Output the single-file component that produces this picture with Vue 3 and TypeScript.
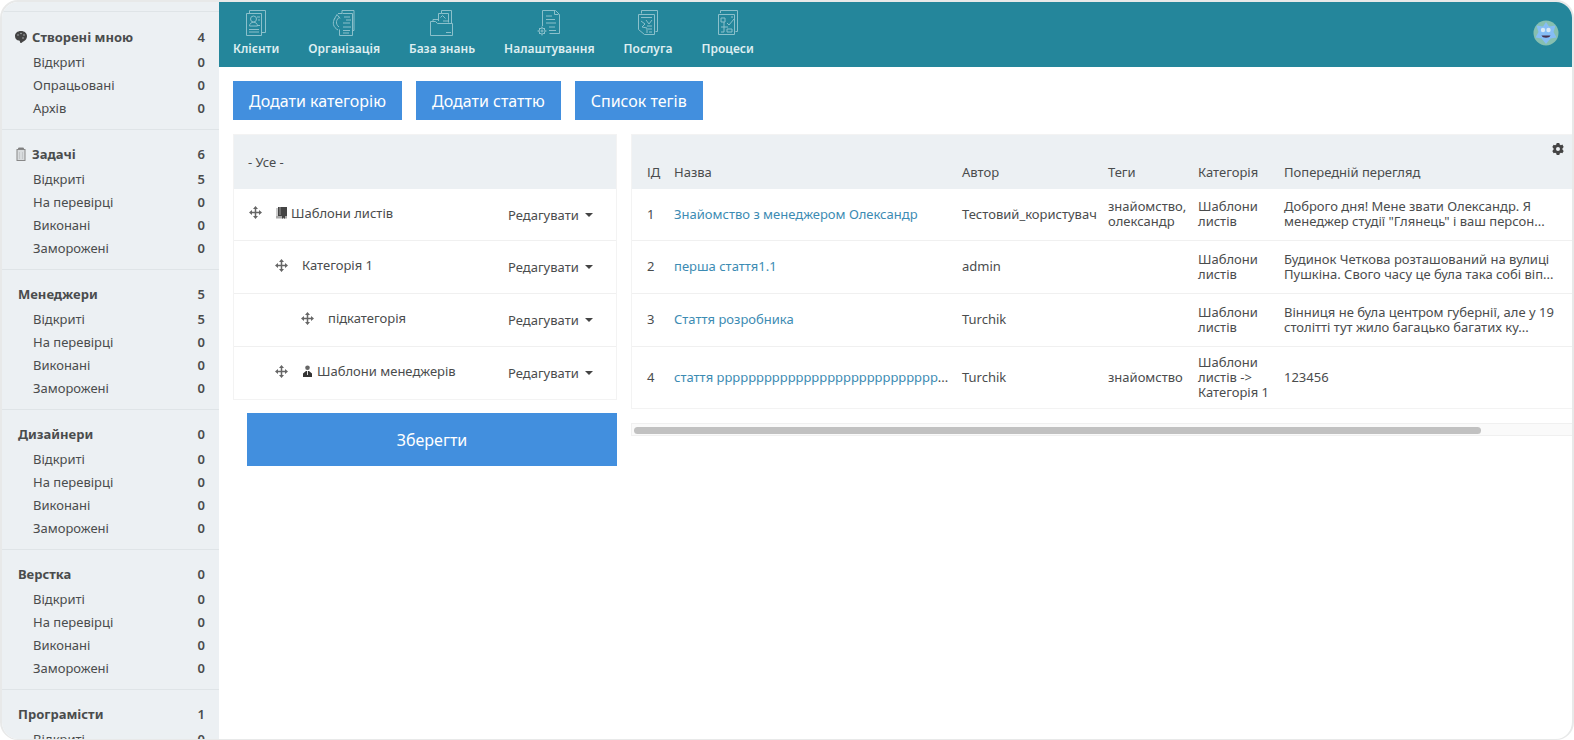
<script setup lang="ts">
interface Counter {
  label: string
  count: number
}
interface Group {
  title: string
  count: number
  icon?: 'palette' | 'clipboard'
  items: Counter[]
}
interface NavItem {
  label: string
  icon: string
}
interface TreeNode {
  label: string
  level: number
  icon?: 'book' | 'user'
}
interface Article {
  id: number
  title: string
  truncated?: boolean
  author: string
  tags: string
  category: string
  preview: string
}

const taskItems = (open: number): Counter[] => [
  { label: 'Відкриті', count: open },
  { label: 'На перевірці', count: 0 },
  { label: 'Виконані', count: 0 },
  { label: 'Заморожені', count: 0 },
]

const groups: Group[] = [
  {
    title: 'Створені мною',
    count: 4,
    icon: 'palette',
    items: [
      { label: 'Відкриті', count: 0 },
      { label: 'Опрацьовані', count: 0 },
      { label: 'Архів', count: 0 },
    ],
  },
  { title: 'Задачі', count: 6, icon: 'clipboard', items: taskItems(5) },
  { title: 'Менеджери', count: 5, items: taskItems(5) },
  { title: 'Дизайнери', count: 0, items: taskItems(0) },
  { title: 'Верстка', count: 0, items: taskItems(0) },
  { title: 'Програмісти', count: 1, items: [{ label: 'Відкриті', count: 0 }] },
]

const nav: NavItem[] = [
  { label: 'Клієнти', icon: 'clients' },
  { label: 'Організація', icon: 'organization' },
  { label: 'База знань', icon: 'knowledge' },
  { label: 'Налаштування', icon: 'settings' },
  { label: 'Послуга', icon: 'service' },
  { label: 'Процеси', icon: 'processes' },
]

const actions: string[] = ['Додати категорію', 'Додати статтю', 'Список тегів']

const tree: TreeNode[] = [
  { label: 'Шаблони листів', level: 0, icon: 'book' },
  { label: 'Категорія 1', level: 1 },
  { label: 'підкатегорія', level: 2 },
  { label: 'Шаблони менеджерів', level: 1, icon: 'user' },
]

const articles: Article[] = [
  {
    id: 1,
    title: 'Знайомство з менеджером Олександр',
    author: 'Тестовий_користувач',
    tags: 'знайомство, олександр',
    category: 'Шаблони листів',
    preview: 'Доброго дня! Мене звати Олександр. Я менеджер студії "Глянець" і ваш персон...',
  },
  {
    id: 2,
    title: 'перша стаття1.1',
    author: 'admin',
    tags: '',
    category: 'Шаблони листів',
    preview: 'Будинок Четкова розташований на вулиці Пушкіна. Свого часу це була така собі віп...',
  },
  {
    id: 3,
    title: 'Стаття розробника',
    author: 'Turchik',
    tags: '',
    category: 'Шаблони листів',
    preview: 'Вінниця не була центром губернії, але у 19 столітті тут жило багацько багатих ку...',
  },
  {
    id: 4,
    title: 'стаття ' + 'р'.repeat(28),
    truncated: true,
    author: 'Turchik',
    tags: 'знайомство',
    category: 'Шаблони листів -> Категорія 1',
    preview: '123456',
  },
]
</script>

<template>
  <div class="app">
    <aside class="sidebar">
      <section v-for="group in groups" :key="group.title" class="group">
        <a href="#" class="group-title">
          <svg v-if="group.icon === 'palette'" class="group-icon" viewBox="0 0 14 14">
            <path d="M7 1C3.2 1 1 3.2 1 6s1.800 4.500 4 4.500c1 0 .8 1.200 1.200 2 .5.900 1.600.5 2.300-.5C10.500 11 13 9.500 13 6c0-2.800-2.500-5-6-5z" fill="#444" />
            <circle cx="4" cy="5" r=".8" fill="#a9adaf" />
            <circle cx="7" cy="3.500" r=".8" fill="#a9adaf" />
            <circle cx="10" cy="5" r=".8" fill="#a9adaf" />
            <circle cx="9" cy="8" r=".8" fill="#a9adaf" />
          </svg>
          <svg v-else-if="group.icon === 'clipboard'" class="group-icon" viewBox="0 0 14 14" fill="none" stroke="#888">
            <rect x="3" y="2.500" width="8" height="11" fill="#d9dcde" />
            <path d="M4.500 2.500V1h5v1.500z" fill="#777" />
            <path d="M5.500 5v7M8.500 5v7" stroke="#c5c8ca" />
          </svg>
          <span>{{ group.title }}</span>
          <span class="count">{{ group.count }}</span>
        </a>
        <a v-for="item in group.items" :key="item.label" href="#" class="group-item">
          <span>{{ item.label }}</span>
          <span class="count">{{ item.count }}</span>
        </a>
      </section>
    </aside>

    <div class="main">
      <header class="topbar">
        <nav class="nav">
          <a v-for="item in nav" :key="item.icon" href="#" class="nav-item">
            <svg class="nav-icon" viewBox="0 0 26 26" fill="none" stroke="currentColor">
              <g v-if="item.icon === 'clients'">
                <path d="M3.500 3.500h15v22h-15zM6.500 3V.5h16v22H19" />
                <circle cx="10.500" cy="9" r="3" />
                <path d="M6.500 16c0-5 8-5 8 0zM6 19.500h10M6 22h10M14 7h3M15 10h2M14 15.500h3" />
              </g>
              <g v-else-if="item.icon === 'organization'">
                <path d="M7 3.500h4V.5h12v20h-1M11.500 3.500h10v22h-13v-6M4 8c-3 5-2 9 3 12" />
                <path d="M3 9.500l3-5 3 4M9 7c-4 2-5 7-1 10M13 7h6M15 10h5M12 13h7M12 17h8M12 20.500h7M12 23h6" />
              </g>
              <g v-else-if="item.icon === 'knowledge'">
                <path d="M1.500 25.500v-14h5l2 2h15v12zM4 11V9.500h5M9.500 11V3.500h3v-3h10v13M12.500 3.500h7v9" />
                <path d="M11.500 7.500l2-2 3 3M14 11h6M17 22.500h5" />
              </g>
              <g v-else-if="item.icon === 'settings'">
                <path d="M6.500 16V.5h13l4 4v19h-10M18.500.5v4h4M10 6h6M10 9.500h9M10 13h10M13 17h6M13 20.500h7" />
                <circle cx="6" cy="21" r="3" />
                <circle cx="6" cy="21" r="1" />
                <path d="M6 16.500V18M6 24v1.500M1.500 21H3M9 21h1.500M3 18l1 1M8 23l1 1M3 24l1-1M8 19l1-1" />
              </g>
              <g v-else-if="item.icon === 'service'">
                <path d="M6.500 3.500V.5h16v21h-2M3.500 4.500h16v20h-10l-6-5zM6 7.500h11" />
                <path d="M6 11l4 3-3 3 5 1v5M11 10l3 4 3-4M12 16h5M13 19h4M14 22h3" />
              </g>
              <g v-else>
                <path d="M5.500 3V.5h17v21h-2M3.500 4.500h16v20h-16z" />
                <path d="M6 8h4v4H6zM12 13l2 2 5-6M9 12v5h4M6 17h3v5H6M12 19h5v3h-5zM16 7h2" />
              </g>
            </svg>
            <span>{{ item.label }}</span>
          </a>
        </nav>
        <button type="button" class="avatar" aria-label="Профіль">
          <svg viewBox="0 0 26 26">
            <circle cx="13" cy="13" r="12.500" fill="#86bfb0" />
            <path d="M13 2l3 4.500 6.500-1-2 6.500 3 5.500-6 1L13 24l-4.500-5.500-6-1 3-5.500-2-6.500 6.500 1z" fill="#86bdf5" />
            <circle cx="10" cy="10" r="2.200" fill="#d9e9f4" />
            <circle cx="15.500" cy="10" r="2.200" fill="#d9e9f4" />
            <path d="M8.500 15.500h9c-1 3-8 3-9 0z" fill="#46314f" />
          </svg>
        </button>
      </header>

      <main class="content">
        <div class="actions">
          <button v-for="action in actions" :key="action" type="button" class="btn">{{ action }}</button>
        </div>

        <div class="columns">
          <div class="categories">
            <div class="tree">
              <div class="tree-head">- Усе -</div>
              <div v-for="node in tree" :key="node.label" class="tree-row" :class="'level-' + node.level">
                <svg class="move" viewBox="0 0 13 13" fill="none" stroke="#666">
                  <path d="M6.500 2v9M2 6.500h9" stroke-width="1.500" />
                  <path d="M6.500 0l2.500 3H4zM6.500 13L4 10h5zM0 6.500L3 4v5zM13 6.500L10 9V4z" fill="#666" stroke="none" />
                </svg>
                <span class="tree-label">
                  <svg v-if="node.icon === 'book'" class="node-icon" viewBox="0 0 11 12">
                    <path d="M2 0h9v9H2z" fill="#444" />
                    <path d="M0 9h11v2.500H0z" fill="#aaa" />
                    <path d="M1 1v8M4 0v8" stroke="#999" />
                    <path d="M6 8h3v4L7.500 10.500 6 12z" fill="#444" />
                  </svg>
                  <svg v-else-if="node.icon === 'user'" class="node-icon" viewBox="0 0 11 12">
                    <circle cx="5.500" cy="2.800" r="2.300" fill="#666" />
                    <path d="M1 12V8.500L4 6h3l3 2.500V12z" fill="#333" />
                    <path d="M5.500 6v4" stroke="#ddd" />
                  </svg>
                  <span>{{ node.label }}</span>
                </span>
                <label class="edit">
                  <select :aria-label="'Дії: ' + node.label">
                    <option>Редагувати</option>
                  </select>
                  <svg class="caret" viewBox="0 0 8 4"><path d="M0 0h8L4 4z" fill="#444" /></svg>
                </label>
              </div>
            </div>
            <button type="button" class="btn save">Зберегти</button>
          </div>

          <div class="articles">
            <div class="table-box">
              <button type="button" class="gear" aria-label="Налаштування таблиці">
                <svg viewBox="0 0 12 12">
                  <path
                    fill-rule="evenodd"
                    fill="#444"
                    d="M4.700 0h2.600l.4 1.600 1.200.6 1.500-.6L11.700 4l-1.200 1.200v1.600L11.700 8l-1.300 2.300-1.500-.5-1.200.6L7.300 12H4.700l-.4-1.600-1.200-.6-1.500.5L.3 8l1.200-1.200V5.200L.3 4l1.300-2.300 1.500.5 1.200-.6zM6 4a2 2 0 100 4 2 2 0 000-4z"
                  />
                </svg>
              </button>
              <table>
                <colgroup>
                  <col class="c-id" />
                  <col class="c-title" />
                  <col class="c-author" />
                  <col class="c-tags" />
                  <col class="c-category" />
                  <col />
                </colgroup>
                <thead>
                  <tr>
                    <th>ІД</th>
                    <th>Назва</th>
                    <th>Автор</th>
                    <th>Теги</th>
                    <th>Категорія</th>
                    <th>Попередній перегляд</th>
                  </tr>
                </thead>
                <tbody>
                  <tr v-for="article in articles" :key="article.id">
                    <td>{{ article.id }}</td>
                    <td class="title"><a href="#">{{ article.title }}</a><span v-if="article.truncated">...</span></td>
                    <td>{{ article.author }}</td>
                    <td>{{ article.tags }}</td>
                    <td>{{ article.category }}</td>
                    <td><div class="preview">{{ article.preview }}</div></td>
                  </tr>
                </tbody>
              </table>
            </div>
            <div class="scroll-track"><div class="scroll-thumb"></div></div>
          </div>
        </div>
      </main>
    </div>
  </div>
</template>

<style>
body {
  background: #fff;
}
</style>

<style scoped>
* {
  box-sizing: border-box;
}
.app {
  display: flex;
  height: 100vh;
  overflow: hidden;
  border: 2px solid #e8e9e9;
  border-bottom-width: 1px;
  border-radius: 18px;
  background: #fff;
  color: #4a4c4d;
  font-family: "Noto Sans", "Open Sans", sans-serif;
  font-size: 13px;
  line-height: 16px;
}
a {
  color: inherit;
  text-decoration: none;
}
button {
  font: inherit;
  border: 0;
  padding: 0;
  background: none;
  cursor: pointer;
}
svg {
  display: block;
  flex: none;
}

.sidebar {
  flex: none;
  width: 217px;
  padding-top: 9px;
  overflow: hidden;
  background: #ecf0f3;
}
.group {
  padding: 11px 14px 10px 16px;
  border-top: 1px solid #dfe4e7;
}
.group:first-child {
  padding-top: 12px;
}
.group-title,
.group-item {
  display: flex;
  align-items: center;
}
.group-title {
  height: 26px;
  font-weight: 700;
}
.group-icon {
  width: 14px;
  height: 14px;
  margin: 0 4px 0 -4px;
}
.group-item {
  height: 23px;
  padding-left: 15px;
}
.count {
  margin-left: auto;
  font-weight: 600;
}

.main {
  display: flex;
  flex: 1;
  flex-direction: column;
  min-width: 0;
}
.topbar {
  display: flex;
  flex: none;
  align-items: center;
  justify-content: space-between;
  height: 65px;
  padding: 0 13px 3px 14px;
  background: #24869b;
}
.nav {
  display: flex;
  gap: 29px;
}
.nav-item {
  display: flex;
  flex-direction: column;
  align-items: center;
  gap: 5px;
  color: #deeef1;
  font-size: 12px;
  font-weight: 600;
}
.nav-icon {
  width: 26px;
  height: 26px;
  color: #8bc0cb;
}
.avatar {
  width: 26px;
  height: 26px;
}

.content {
  padding: 14px 0 0 14px;
}
.actions {
  display: flex;
  gap: 14px;
}
.btn {
  height: 39px;
  padding: 0 16px;
  background: #428fde;
  color: #fff;
  font-size: 16px;
}
.columns {
  display: flex;
  gap: 14px;
  margin-top: 14px;
}
.categories {
  flex: none;
  width: 384px;
}
.tree,
.table-box {
  border: 1px solid #f3f3f3;
}
.tree-head {
  display: flex;
  align-items: center;
  height: 54px;
  padding-left: 14px;
  background: #ecf0f3;
}
.tree-row {
  display: flex;
  align-items: center;
  height: 51px;
  padding: 0 23px 4px 15px;
}
.tree-row + .tree-row {
  height: 53px;
  border-top: 1px solid #f0f0f0;
}
.tree-row.level-1 {
  padding-left: 41px;
}
.tree-row.level-2 {
  padding-left: 67px;
}
.move {
  width: 13px;
  height: 13px;
  margin-right: 14px;
}
.tree-label {
  display: flex;
  align-items: center;
  gap: 4px;
}
.node-icon {
  width: 11px;
  height: 12px;
}
.edit {
  display: flex;
  align-items: center;
  gap: 6px;
  margin-left: auto;
  padding-top: 4px;
}
.edit select {
  appearance: none;
  padding: 0;
  border: 0;
  background: none;
  color: inherit;
  font: inherit;
}
.caret {
  width: 8px;
  height: 4px;
}
.save {
  display: block;
  width: calc(100% - 14px);
  height: 53px;
  margin: 13px 0 0 14px;
}

.articles {
  flex: 1;
  min-width: 0;
}
.table-box {
  position: relative;
  border-right: 0;
}
.gear {
  position: absolute;
  top: 8px;
  right: 8px;
  width: 12px;
  height: 12px;
}
table {
  width: 100%;
  table-layout: fixed;
  border-collapse: collapse;
}
.c-id {
  width: 28px;
}
.c-title {
  width: 288px;
}
.c-author {
  width: 146px;
}
.c-tags {
  width: 90px;
}
.c-category {
  width: 86px;
}
th {
  height: 54px;
  padding: 0 0 9px 14px;
  background: #ecf0f3;
  font-weight: 400;
  text-align: left;
  vertical-align: bottom;
  white-space: nowrap;
}
td {
  height: 53px;
  padding: 0 0 0 14px;
  line-height: 15px;
}
th:first-child,
td:first-child {
  padding-left: 15px;
}
tr:first-child td {
  height: 51px;
}
tr + tr td {
  border-top: 1px solid #f0f0f0;
}
tr:last-child td {
  height: 62px;
}
.title {
  white-space: nowrap;
}
.title a {
  color: #3c8bb3;
}
.preview {
  max-width: 276px;
}
.scroll-track {
  height: 13px;
  margin-top: 14px;
  padding: 3px 2px;
  border: 1px solid #f0f0f0;
  border-right: 0;
  background: #fafafa;
}
.scroll-thumb {
  width: calc(100% - 89px);
  height: 7px;
  border-radius: 4px;
  background: #c1c1c1;
}
</style>
